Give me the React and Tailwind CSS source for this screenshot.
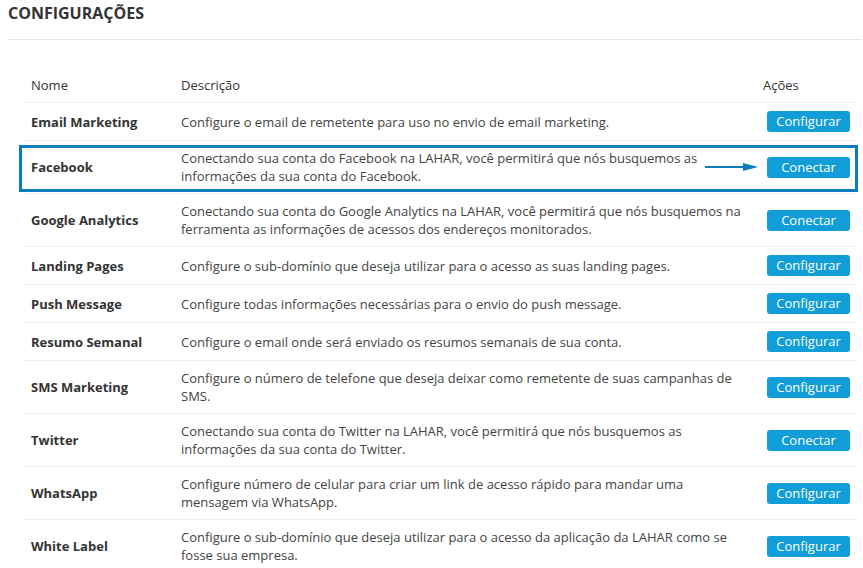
const ROWS = [
  { name: "Email Marketing", desc: "Configure o email de remetente para uso no envio de email marketing.", action: "Configurar" },
  { name: "Facebook", desc: "Conectando sua conta do Facebook na LAHAR, você permitirá que nós busquemos as informações da sua conta do Facebook.", action: "Conectar", highlight: true },
  { name: "Google Analytics", desc: "Conectando sua conta do Google Analytics na LAHAR, você permitirá que nós busquemos na ferramenta as informações de acessos dos endereços monitorados.", action: "Conectar" },
  { name: "Landing Pages", desc: "Configure o sub-domínio que deseja utilizar para o acesso as suas landing pages.", action: "Configurar" },
  { name: "Push Message", desc: "Configure todas informações necessárias para o envio do push message.", action: "Configurar" },
  { name: "Resumo Semanal", desc: "Configure o email onde será enviado os resumos semanais de sua conta.", action: "Configurar" },
  { name: "SMS Marketing", desc: "Configure o número de telefone que deseja deixar como remetente de suas campanhas de SMS.", action: "Configurar" },
  { name: "Twitter", desc: "Conectando sua conta do Twitter na LAHAR, você permitirá que nós busquemos as informações da sua conta do Twitter.", action: "Conectar" },
  { name: "WhatsApp", desc: "Configure número de celular para criar um link de acesso rápido para mandar uma mensagem via WhatsApp.", action: "Configurar" },
  { name: "White Label", desc: "Configure o sub-domínio que deseja utilizar para o acesso da aplicação da LAHAR como se fosse sua empresa.", action: "Configurar" },
];

function Row({ name, desc, action, highlight }) {
  return (
    <div className="relative grid grid-cols-[150px_1fr_103px] items-center border-b border-[#eeeeee]">
      <div className="px-2 py-2 font-bold text-[#333]">{name}</div>
      <div className="px-2 py-2 text-[#444]">{desc}</div>
      <div className="flex justify-end px-2 py-2">
        <button className="flex h-[21px] w-[83px] items-center justify-center rounded-[3px] bg-[#109dd8] text-[13px] leading-none text-white">
          {action}
        </button>
      </div>
      {highlight && (
        <>
          <div className="pointer-events-none absolute left-[-4px] right-0 top-[4px] h-[47px] border-[3px] border-[#0b7cbd]" />
          <svg className="absolute left-[682px] top-[21px]" width="54" height="10" viewBox="0 0 54 10">
            <line x1="0" y1="5" x2="40" y2="5" stroke="#0b7cbd" strokeWidth="2" />
            <polygon points="38,1 53,5 38,9" fill="#0b7cbd" />
          </svg>
        </>
      )}
    </div>
  );
}

export default function App() {
  return (
    <div className="min-h-screen bg-white text-[13px] leading-[18px]" style={{ fontFamily: "'Open Sans', 'Liberation Sans', sans-serif" }}>
      <div className="ml-2 mr-px h-10 border-b border-[#e5e5e5]">
        <h1 className="pt-[2px] text-[16px] font-bold leading-[22px] text-[#333]">CONFIGURAÇÕES</h1>
      </div>

      <div className="ml-[23px] mr-[5px] mt-[28px]">
        <div className="grid grid-cols-[150px_1fr_103px] border-b border-[#eeeeee] text-[#333]">
          <div className="px-2 py-2">Nome</div>
          <div className="px-2 py-2">Descrição</div>
          <div className="px-2 py-2">Ações</div>
        </div>
        {ROWS.map((r) => (
          <Row key={r.name} {...r} />
        ))}
      </div>
    </div>
  );
}
